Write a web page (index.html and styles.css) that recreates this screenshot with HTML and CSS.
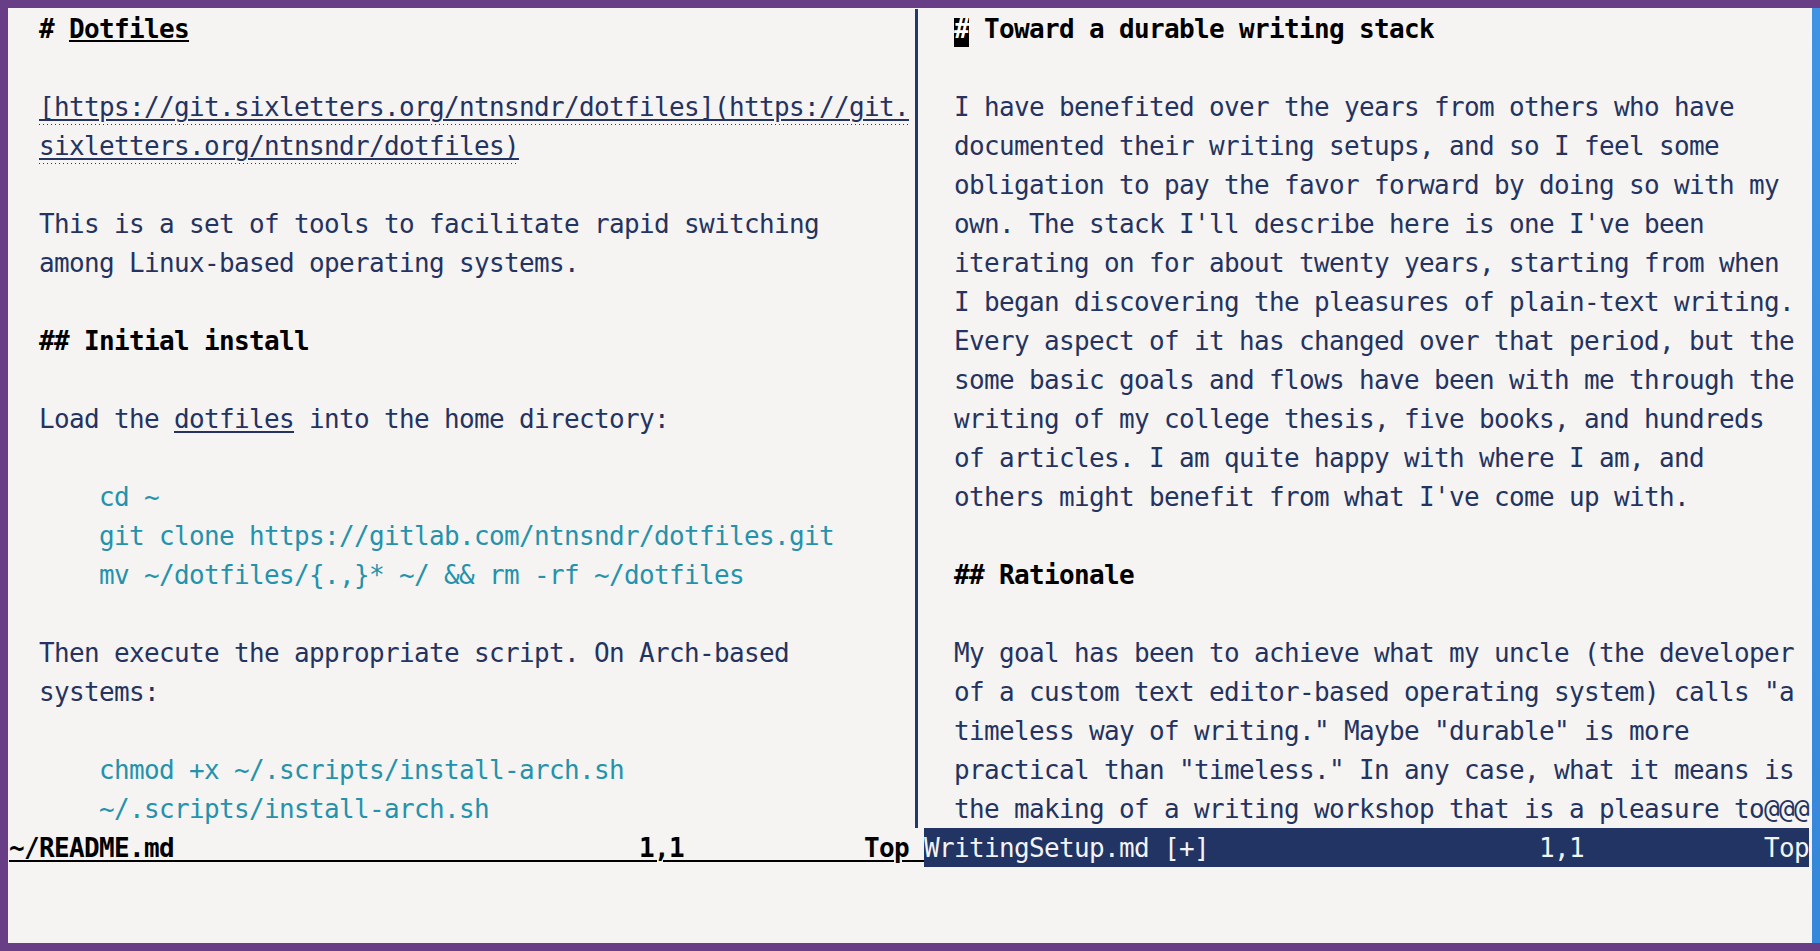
FILE: index.html
```html
<!DOCTYPE html>
<html lang="en">
<head>
<meta charset="utf-8">
<title>vim - README.md / WritingSetup.md</title>
<link rel="stylesheet" href="styles.css">
</head>
<body>
<div class="term">
  <div class="win">
    <div class="pane pane-left">
      <div class="ln"><span class="hd"># <span class="hd-u">Dotfiles</span></span></div>
      <div class="ln"></div>
      <div class="ln"><span class="link">[https://git.sixletters.org/ntnsndr/dotfiles](https://git.</span></div>
      <div class="ln"><span class="link">sixletters.org/ntnsndr/dotfiles)</span></div>
      <div class="ln"></div>
      <div class="ln">This is a set of tools to facilitate rapid switching</div>
      <div class="ln">among Linux-based operating systems.</div>
      <div class="ln"></div>
      <div class="ln"><span class="hd">## Initial install</span></div>
      <div class="ln"></div>
      <div class="ln">Load the <span class="ul">dotfiles</span> into the home directory:</div>
      <div class="ln"></div>
      <div class="ln code">    cd ~</div>
      <div class="ln code">    git clone https://gitlab.com/ntnsndr/dotfiles.git</div>
      <div class="ln code">    mv ~/dotfiles/{.,}* ~/ &amp;&amp; rm -rf ~/dotfiles</div>
      <div class="ln"></div>
      <div class="ln">Then execute the appropriate script. On Arch-based</div>
      <div class="ln">systems:</div>
      <div class="ln"></div>
      <div class="ln code">    chmod +x ~/.scripts/install-arch.sh</div>
      <div class="ln code">    ~/.scripts/install-arch.sh</div>
    </div>
    <div class="vsep"><div class="vsep-line"></div></div>
    <div class="pane pane-right">
      <div class="ln"><span class="cursor">#</span><span class="hd"> Toward a durable writing stack</span></div>
      <div class="ln"></div>
      <div class="ln">I have benefited over the years from others who have</div>
      <div class="ln">documented their writing setups, and so I feel some</div>
      <div class="ln">obligation to pay the favor forward by doing so with my</div>
      <div class="ln">own. The stack I'll describe here is one I've been</div>
      <div class="ln">iterating on for about twenty years, starting from when</div>
      <div class="ln">I began discovering the pleasures of plain-text writing.</div>
      <div class="ln">Every aspect of it has changed over that period, but the</div>
      <div class="ln">some basic goals and flows have been with me through the</div>
      <div class="ln">writing of my college thesis, five books, and hundreds</div>
      <div class="ln">of articles. I am quite happy with where I am, and</div>
      <div class="ln">others might benefit from what I've come up with.</div>
      <div class="ln"></div>
      <div class="ln"><span class="hd">## Rationale</span></div>
      <div class="ln"></div>
      <div class="ln">My goal has been to achieve what my uncle (the developer</div>
      <div class="ln">of a custom text editor-based operating system) calls "a</div>
      <div class="ln">timeless way of writing." Maybe "durable" is more</div>
      <div class="ln">practical than "timeless." In any case, what it means is</div>
      <div class="ln">the making of a writing workshop that is a pleasure to@@@</div>
    </div>
    <div class="st st-left"><span class="st-text">~/README.md                               1,1            Top </span></div>
    <div class="st st-right">WritingSetup.md [+]                      1,1            Top</div>
  </div>
  <div class="cmdline"></div>
</div>
</body>
</html>
```

FILE: styles.css
```css
html {
  height: 100%;
  overflow: hidden;
  background:
    linear-gradient(#3f93e2, #3687d9) 1812px 8px / 8px 935px no-repeat,
    #683e87;
}

body {
  margin: 8px;
}

.term {
  width: 1804px;
  height: 935px;
  box-sizing: border-box;
  padding: 1px 0 0 1px;
  background: #f5f4f2;
  font-family: "DejaVu Sans Mono", "Liberation Mono", monospace;
  font-size: 26px;
  letter-spacing: -0.653px;
  line-height: 39px;
  color: #24335f;
}

.win {
  display: grid;
  grid-template-columns: 900px 15px 885px;
  grid-template-rows: 819px 39px;
}

.pane {
  box-sizing: border-box;
  padding: 1px 0 0 30px;
}

.ln {
  height: 39px;
  white-space: pre;
}

.hd {
  color: #000;
  font-weight: bold;
}

.hd-u {
  text-decoration: underline;
  text-decoration-thickness: 2px;
  text-underline-offset: 2px;
}

.link {
  text-decoration: underline;
  text-decoration-thickness: 2px;
  text-underline-offset: 3px;
  padding-bottom: 3px;
  background-image: linear-gradient(to right, #24335f 1px, transparent 1px);
  background-size: 4px 1px;
  background-repeat: repeat-x;
  background-position: 0 100%;
}

.ul {
  text-decoration: underline;
  text-decoration-thickness: 2px;
  text-underline-offset: 3px;
}

.code {
  color: #2592ac;
}

.cursor {
  display: inline-block;
  width: 15px;
  height: 29px;
  margin-top: 8px;
  vertical-align: top;
  line-height: 23px;
  background: #000;
  color: #fff;
  font-weight: bold;
}

.vsep {
  display: flex;
  justify-content: center;
}

.vsep-line {
  width: 3px;
  background: #24386a;
}

.st {
  height: 39px;
  line-height: 40px;
  white-space: pre;
}

.st-left {
  grid-column: 1 / 3;
  color: #000;
  font-weight: bold;
}

.st-text {
  text-decoration: underline;
  text-decoration-thickness: 2px;
  text-underline-offset: 3px;
}

.st-right {
  background: #213464;
  color: #f3f3f3;
}

.cmdline {
  height: 39px;
}
```
